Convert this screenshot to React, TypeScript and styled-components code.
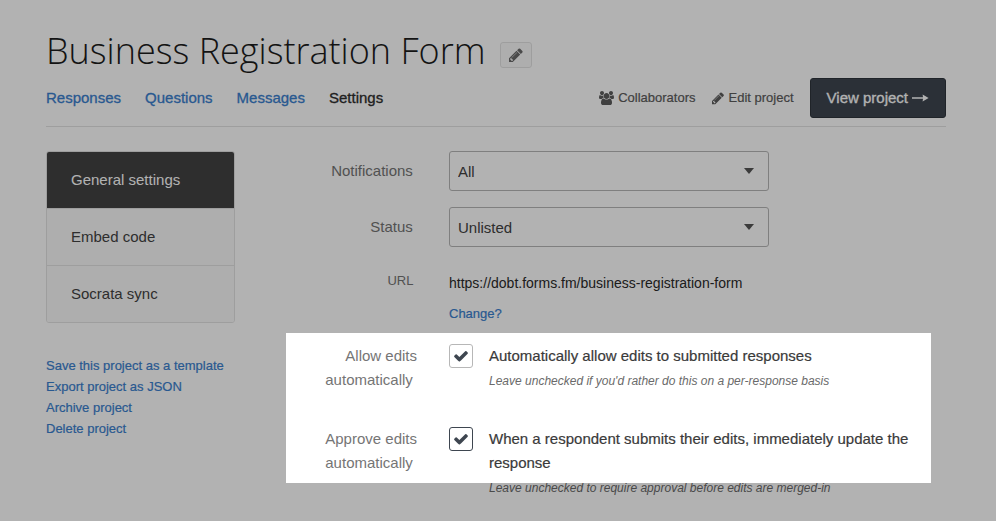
import React, { useState } from "react";
import styled, { createGlobalStyle } from "styled-components";

const color = {
  link: "#3a80cf",
  ink: "#424242",
  label: "#757575",
  line: "#e3e3e3",
  navy: "#3e4650",
};

const GlobalStyle = createGlobalStyle`
  *, *::before, *::after { box-sizing: border-box; }
  body {
    margin: 0;
    background: #fff;
    color: ${color.ink};
    font-family: "Liberation Sans", Arial, sans-serif;
    font-size: 15px;
    line-height: 24px;
    overflow: hidden;
  }
`;

const Page = styled.div`
  padding: 24px 50px 24px 46px;
`;

const TitleRow = styled.div`
  display: flex;
  align-items: center;
  gap: 15px;
`;

const Title = styled.h1`
  margin: 0;
  color: #1c1c1c;
  font-family: "Open Sans", "Noto Sans", sans-serif;
  font-size: 36px;
  font-weight: 300;
  line-height: 54px;
`;

const RenameButton = styled.button`
  display: flex;
  align-items: center;
  justify-content: center;
  width: 32px;
  height: 26px;
  margin-top: 8px;
  padding: 0;
  color: #6a6a6a;
  background: #fafafa;
  border: 1px solid ${color.line};
  border-radius: 3px;
`;

const Toolbar = styled.div`
  display: flex;
  align-items: center;
  justify-content: space-between;
  padding-bottom: 8px;
  border-bottom: 1px solid ${color.line};
`;

const Tabs = styled.nav`
  display: flex;
  gap: 24px;
`;

const Tab = styled.a<{ $current?: boolean }>`
  color: ${(p) => (p.$current ? "#2e2e2e" : color.link)};
  text-decoration: none;
  -webkit-text-stroke: 0.3px currentColor;
`;

const Actions = styled.div`
  display: flex;
  align-items: center;
  gap: 16px;
`;

const ActionLink = styled.a`
  display: flex;
  align-items: center;
  gap: 4px;
  color: #5c5c5c;
  font-size: 13px;
  text-decoration: none;
  -webkit-text-stroke: 0.2px currentColor;
`;

const PrimaryButton = styled.button`
  display: flex;
  align-items: center;
  gap: 4px;
  height: 40px;
  padding: 0 16px;
  color: #fff;
  background: ${color.navy};
  border: 1px solid #2e343c;
  border-radius: 3px;
  font: inherit;
  -webkit-text-stroke: 0.3px currentColor;
`;

const Columns = styled.div`
  display: flex;
  gap: 51px;
  padding-top: 24px;
`;

const Sidebar = styled.aside`
  flex: 0 0 189px;
  min-width: 0;
`;

const Menu = styled.nav`
  border: 1px solid ${color.line};
  border-radius: 3px;
  overflow: hidden;
`;

const MenuItem = styled.a<{ $current?: boolean }>`
  display: block;
  padding: 16px 24px;
  color: ${(p) => (p.$current ? "#fff" : color.ink)};
  background: ${(p) => (p.$current ? color.ink : "#fafafa")};
  text-decoration: none;

  & + & {
    border-top: 1px solid ${color.line};
  }
`;

const QuickLinks = styled.div`
  display: flex;
  flex-direction: column;
  align-items: flex-start;
  margin-top: 32px;
  line-height: 21px;
`;

const TextLink = styled.a`
  color: ${color.link};
  font-size: 13px;
  text-decoration: none;
  -webkit-text-stroke: 0.2px currentColor;
`;

const Form = styled.form`
  flex: 1;
  min-width: 0;
`;

const Field = styled.div`
  display: grid;
  grid-template-columns: 131px minmax(0, 1fr);
  column-gap: 32px;
  margin-bottom: 16px;
`;

const Label = styled.label`
  padding: 8px 0;
  color: ${color.label};
  text-align: right;
`;

const SelectBox = styled.div`
  display: grid;
  align-items: center;
  max-width: 320px;

  & > * {
    grid-area: 1 / 1;
  }
`;

const Select = styled.select`
  appearance: none;
  width: 100%;
  height: 40px;
  padding: 2px 32px 0 8px;
  color: ${color.ink};
  background: #fff;
  border: 1px solid #b7b7b7;
  border-radius: 3px;
  font: inherit;
`;

const Caret = styled.svg`
  justify-self: end;
  margin-right: 15px;
  pointer-events: none;
`;

const UrlLabel = styled.div`
  padding: 6px 0;
  color: ${color.label};
  font-size: 13px;
  text-align: right;
`;

const UrlValue = styled.div`
  padding-top: 8px;
  color: #2a2a2a;
  font-size: 14px;
`;

const UrlChange = styled.div`
  margin-top: 6px;
`;

const Highlighted = styled.div`
  position: relative;
  margin-top: -9px;
  padding-top: 11px;
`;

const Spotlight = styled.div`
  position: absolute;
  inset: 0 15px 16px 0;
  box-shadow: 0 0 0 2000px rgba(0, 0, 0, 0.3);
  pointer-events: none;
`;

const CheckField = styled.div`
  display: grid;
  grid-template-columns: 131px 24px minmax(0, 1fr);
  column-gap: 32px;

  & + & {
    margin-top: 35px;
  }
`;

const CheckLabel = styled.div`
  color: ${color.label};
  padding-left: 24px;
  text-align: right;
`;

const CheckBox = styled.span<{ $active?: boolean }>`
  display: grid;
  width: 24px;
  height: 24px;
  place-items: center;
  color: ${color.navy};
  border: 1px solid ${(p) => (p.$active ? color.navy : "#b7b7b7")};
  border-radius: 3px;

  & > * {
    grid-area: 1 / 1;
  }
`;

const CheckInput = styled.input`
  appearance: none;
  width: 100%;
  height: 100%;
  margin: 0;

  &:not(:checked) + svg {
    visibility: hidden;
  }
`;

const CheckGlyph = styled.svg`
  pointer-events: none;
`;

const CheckBody = styled.div`
  margin-left: -16px;
`;

const CheckText = styled.label`
  display: block;
  color: #3a3a3a;
  -webkit-text-stroke: 0.2px currentColor;
`;

const Hint = styled.p`
  margin: 0;
  padding-top: 3px;
  color: #6a6a6a;
  font-size: 12px;
  font-style: italic;
  line-height: 21px;
`;

const Pencil = ({ size }: { size: number }) => (
  <svg width={size} height={size} viewBox="128 100 1664 1664" fill="currentColor" aria-hidden="true">
    <path d="M491 1536l91-91-235-235-91 91v107h128v128h107zm523-928q0-22-22-22-10 0-17 7l-542 542q-7 7-7 17 0 22 22 22 10 0 17-7l542-542q7-7 7-17zm-54-192l416 416-832 832h-416v-416zm683 96q0 53-37 90l-166 166-416-416 166-165q36-38 90-38 53 0 91 38l235 234q37 39 37 91z" />
  </svg>
);

const Users = () => (
  <svg width="15" height="14" viewBox="0 0 1920 1792" fill="currentColor" aria-hidden="true">
    <path d="M593 896q-162 5-265 128h-134q-82 0-138-40.5t-56-118.5q0-353 124-353 6 0 43.5 21t97.5 42.5 119 21.5q67 0 133-23-5 37-5 66 0 139 81 256zm1071 637q0 120-73 189.5t-194 69.5h-874q-121 0-194-69.5t-73-189.5q0-53 3.5-103.5t14-109 26.5-108.5 43-97.5 62-81 85.5-53.5 111.5-20q10 0 43 21.5t73 48 107 48 135 21.5 135-21.5 107-48 73-48 43-21.5q61 0 111.5 20t85.5 53.5 62 81 43 97.5 26.5 108.5 14 109 3.5 103.5zm-1024-1277q0 106-75 181t-181 75-181-75-75-181 75-181 181-75 181 75 75 181zm704 384q0 159-112.5 271.5t-271.5 112.5-271.5-112.5-112.5-271.5 112.5-271.5 271.5-112.5 271.5 112.5 112.5 271.5zm576 225q0 78-56 118.5t-138 40.5h-134q-103-123-265-128 81-117 81-256 0-29-5-66 66 23 133 23 59 0 119-21.5t97.5-42.5 43.5-21q124 0 124 353zm-128-609q0 106-75 181t-181 75-181-75-75-181 75-181 181-75 181 75 75 181z" />
  </svg>
);

const Arrow = () => (
  <svg width="17" height="8" viewBox="0 0 17 8" fill="currentColor" aria-hidden="true">
    <path d="M0 3.3h11L10.6.6 16.6 4l-6 3.4.4-2.7H0z" />
  </svg>
);

type DropdownProps = { id: string; label: string; options: string[] };

function Dropdown({ id, label, options }: DropdownProps) {
  return (
    <Field>
      <Label htmlFor={id}>{label}&nbsp;</Label>
      <SelectBox>
        <Select id={id} defaultValue={options[0]}>
          {options.map((o) => (
            <option key={o}>{o}</option>
          ))}
        </Select>
        <Caret width="10" height="6" viewBox="0 0 10 6" fill="#555" aria-hidden="true">
          <path d="M0 0h10L5 6z" />
        </Caret>
      </SelectBox>
    </Field>
  );
}

type CheckRowProps = { id: string; label: string; text: string; hint: string; active?: boolean };

function CheckRow({ id, label, text, hint, active }: CheckRowProps) {
  const [checked, setChecked] = useState(true);
  return (
    <CheckField>
      <CheckLabel>{label}&nbsp;</CheckLabel>
      <CheckBox $active={active}>
        <CheckInput
          id={id}
          type="checkbox"
          checked={checked}
          onChange={(e) => setChecked(e.target.checked)}
          aria-describedby={`${id}-hint`}
        />
        <CheckGlyph width="16" height="16" viewBox="0 0 1792 1792" fill="currentColor" aria-hidden="true">
          <path d="M1671 566q0 40-28 68l-724 724-136 136q-28 28-68 28t-68-28l-136-136-362-362q-28-28-28-68t28-68l136-136q28-28 68-28t68 28l294 295 656-657q28-28 68-28t68 28l136 136q28 28 28 68z" />
        </CheckGlyph>
      </CheckBox>
      <CheckBody>
        <CheckText htmlFor={id}>{text}</CheckText>
        <Hint id={`${id}-hint`}>{hint}</Hint>
      </CheckBody>
    </CheckField>
  );
}

export default function App() {
  return (
    <>
      <GlobalStyle />
      <Page>
        <TitleRow>
          <Title>Business Registration Form</Title>
          <RenameButton type="button" aria-label="Rename project">
            <Pencil size={15} />
          </RenameButton>
        </TitleRow>
        <Toolbar>
          <Tabs>
            <Tab href="#responses">Responses</Tab>
            <Tab href="#questions">Questions</Tab>
            <Tab href="#messages">Messages</Tab>
            <Tab href="#settings" $current aria-current="page">Settings</Tab>
          </Tabs>
          <Actions>
            <ActionLink href="#collaborators"><Users />Collaborators</ActionLink>
            <ActionLink href="#edit"><Pencil size={13} />Edit project</ActionLink>
            <PrimaryButton type="button">View project<Arrow /></PrimaryButton>
          </Actions>
        </Toolbar>
        <Columns>
          <Sidebar>
            <Menu>
              <MenuItem href="#general" $current aria-current="page">General settings</MenuItem>
              <MenuItem href="#embed">Embed code</MenuItem>
              <MenuItem href="#socrata">Socrata sync</MenuItem>
            </Menu>
            <QuickLinks>
              <TextLink href="#template">Save this project as a template</TextLink>
              <TextLink href="#export">Export project as JSON</TextLink>
              <TextLink href="#archive">Archive project</TextLink>
              <TextLink href="#delete">Delete project</TextLink>
            </QuickLinks>
          </Sidebar>
          <Form>
            <Dropdown id="notifications" label="Notifications" options={["All", "None"]} />
            <Dropdown id="status" label="Status" options={["Unlisted", "Listed"]} />
            <Field>
              <UrlLabel>URL&nbsp;</UrlLabel>
              <UrlValue>
                https://dobt.forms.fm/business-registration-form
                <UrlChange>
                  <TextLink href="#change">Change?</TextLink>
                </UrlChange>
              </UrlValue>
            </Field>
            <Highlighted>
              <CheckRow
                id="allow"
                label="Allow edits automatically"
                text="Automatically allow edits to submitted responses"
                hint="Leave unchecked if you'd rather do this on a per-response basis"
              />
              <CheckRow
                id="approve"
                label="Approve edits automatically"
                text="When a respondent submits their edits, immediately update the response"
                hint="Leave unchecked to require approval before edits are merged-in"
                active
              />
              <Spotlight />
            </Highlighted>
          </Form>
        </Columns>
      </Page>
    </>
  );
}
